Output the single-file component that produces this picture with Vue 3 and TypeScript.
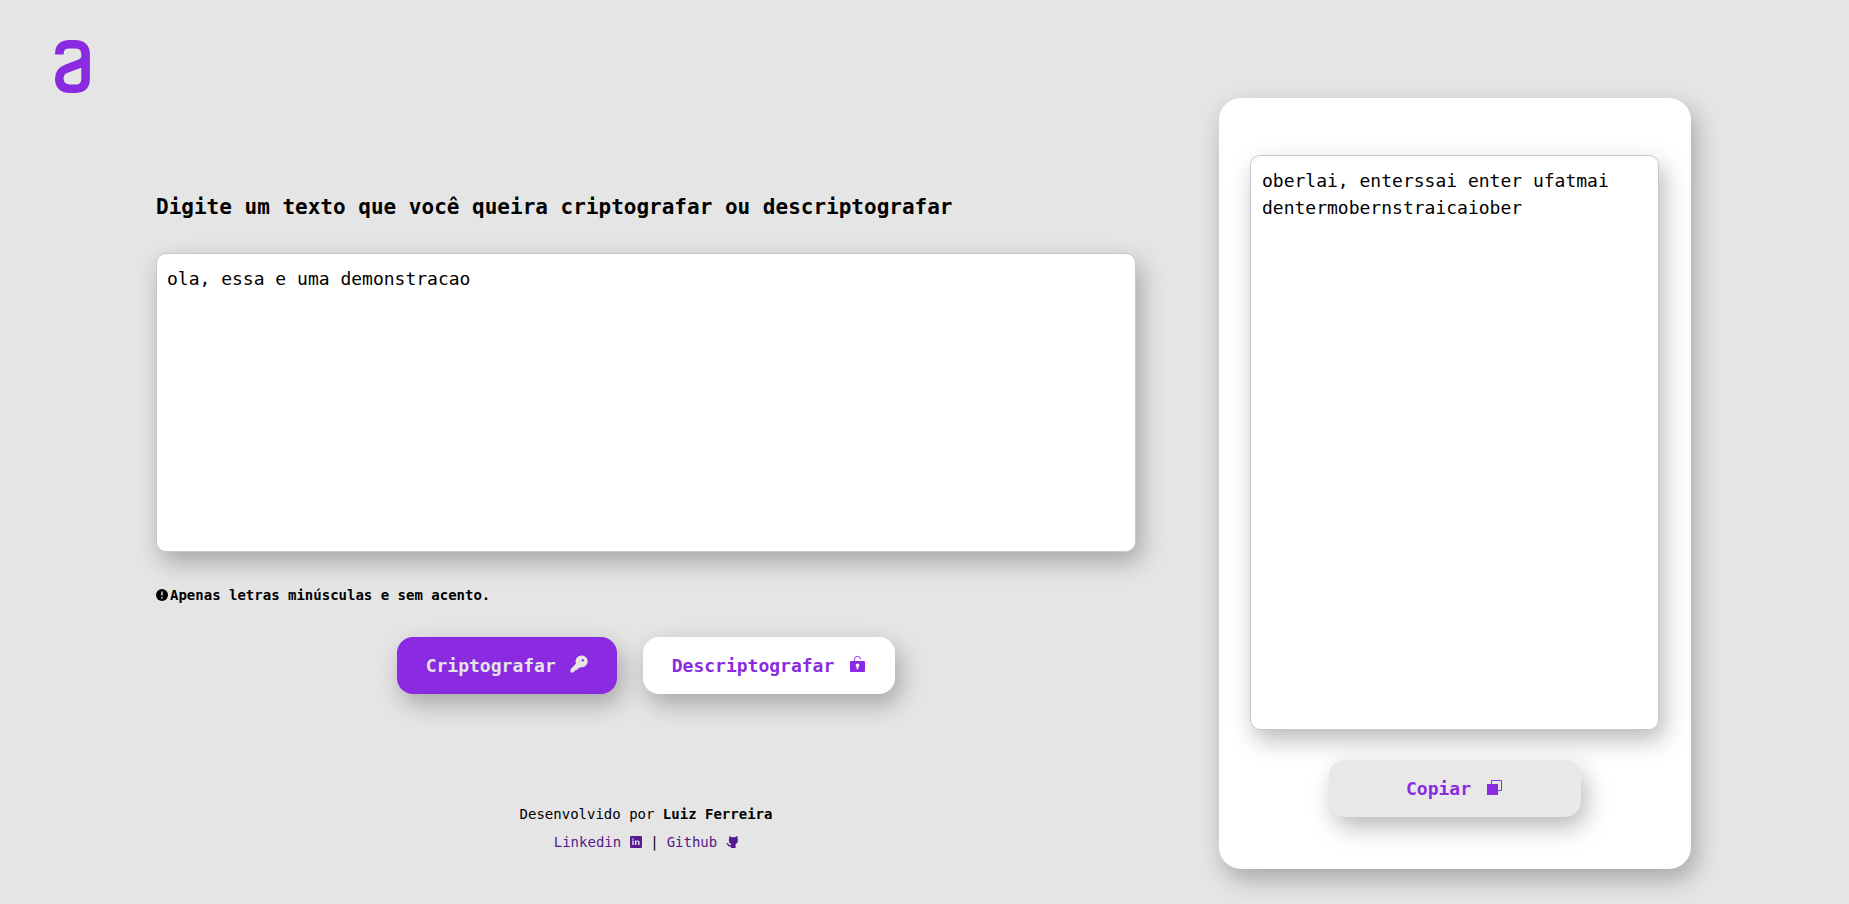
<script setup lang="ts">
import { ref } from 'vue'

const rules: [string, string][] = [
  ['e', 'enter'],
  ['i', 'imes'],
  ['a', 'ai'],
  ['o', 'ober'],
  ['u', 'ufat'],
]

const message = ref('ola, essa e uma demonstracao')
const result = ref('oberlai, enterssai enter ufatmai dentermobernstraicaiober')

function encrypt(): void {
  const table = new Map(rules)
  result.value = message.value.replace(/[eiaou]/g, (letter) => table.get(letter) ?? letter)
}

function decrypt(): void {
  result.value = rules.reduce((text, [letter, code]) => text.split(code).join(letter), message.value)
}

function copy(): void {
  void navigator.clipboard?.writeText(result.value)
}
</script>

<template>
  <div class="page">
    <header class="header">
      <svg class="logo" viewBox="0 0 35 53" role="img" aria-label="Logo">
        <path d="M4.3 14.5C4.3 7 8 4.3 15 4.3H20C27 4.3 30.6 8 30.6 14V38.5C30.6 46 26.5 48.7 20 48.7H15C8 48.7 4.3 45.5 4.3 39C4.3 32.5 7 30.3 12 28.5L24.5 23.8C29 22 30.6 20 30.6 15" />
      </svg>
    </header>

    <main class="main">
      <section class="editor">
        <label class="title" for="message">Digite um texto que você queira criptografar ou descriptografar</label>
        <textarea id="message" v-model="message" class="field message" spellcheck="false"></textarea>
        <p class="note">
          <svg class="note-icon" viewBox="0 0 12 12" aria-hidden="true">
            <circle cx="6" cy="6" r="6" />
            <path d="M6 2.6V6.6M6 8V9.4" />
          </svg>
          <span>Apenas letras minúsculas e sem acento.</span>
        </p>
        <div class="actions">
          <button class="button primary" type="button" @click="encrypt">
            Criptografar
            <svg class="icon" viewBox="0 0 18 18" aria-hidden="true">
              <path fill-rule="evenodd" d="M11.6.5a5.9 5.9 0 1 1-1.3 11.6L8.9 13.4H7.4V15H5.8L3.7 17.1Q3.3 17.5 2.7 17.5H1.2Q.5 17.5.5 16.8V14.9Q.5 14.3 1 13.8L6 8.6A5.9 5.9 0 0 1 11.6.5ZM12.7 4.1a1.2 1.2 0 1 0 .1 0Z" />
            </svg>
          </button>
          <button class="button" type="button" @click="decrypt">
            Descriptografar
            <svg class="icon" viewBox="0 0 18 18" aria-hidden="true">
              <path fill-rule="evenodd" d="M3 6H16Q17 6 17 7V16Q17 17 16 17H3Q2 17 2 16V7Q2 6 3 6ZM9.5 8.6A1.9 1.9 0 0 0 8.7 12.2V14.2H10.3V12.2A1.9 1.9 0 0 0 9.5 8.6Z" />
              <path class="line" d="M6.5 6V4.5A3 3 0 0 1 12.5 4.2" />
            </svg>
          </button>
        </div>
        <footer class="footer">
          <p>Desenvolvido por <strong>Luiz Ferreira</strong></p>
          <p class="links">
            <a href="#linkedin">Linkedin
              <svg class="link-icon" viewBox="0 0 12 12" aria-hidden="true">
                <path fill-rule="evenodd" d="M1 0H11Q12 0 12 1V11Q12 12 11 12H1Q0 12 0 11V1Q0 0 1 0ZM2.3 4.6V9H3.7V4.6ZM2.3 2.4V3.7H3.7V2.4ZM5 4.6V9H6.4V6.6Q6.4 5.6 7.3 5.6T8.2 6.6V9H9.6V6.3Q9.6 4.4 7.9 4.4Q6.9 4.4 6.4 5.1V4.6Z" />
              </svg>
            </a>
            <span>|</span>
            <a href="#github">Github
              <svg class="link-icon" viewBox="0 0 12 12" aria-hidden="true">
                <path d="M3.6 0 5.6 1.2H9L11.2 0Q11.8 1 11.6 2.6Q12.8 6.6 9.6 8V12H5V10.6Q2.6 11 1.7 9.3Q1.2 7.6 0 7.2Q1.9 6.7 2.7 8.2Q3.5 9.5 5 9V8Q2 6.6 3.2 2.6Q3 1 3.6 0Z" />
              </svg>
            </a>
          </p>
        </footer>
      </section>

      <section class="card">
        <textarea v-model="result" class="field result" aria-label="Resultado" readonly></textarea>
        <button class="button copy" type="button" @click="copy">
          Copiar
          <svg class="icon" viewBox="0 0 18 18" aria-hidden="true">
            <path d="M2 6H13V17H2Z" />
            <path class="line" d="M6.5 6V2.5H16.5V12.5H13" />
          </svg>
        </button>
      </section>
    </main>
  </div>
</template>

<style>
body {
  margin: 0;
  background: #e5e5e5;
}
</style>

<style scoped>
.page {
  box-sizing: border-box;
  min-height: 100vh;
  display: flex;
  flex-direction: column;
  background: #e5e5e5;
  color: #000;
  font-family: "DejaVu Sans Mono", monospace;
  font-size: 14px;
}

.header {
  padding: 40px 55px 5px;
}

.logo {
  display: block;
  width: 35px;
  height: 53px;
  fill: none;
  stroke: #8a2be2;
  stroke-width: 8.6;
}

.main {
  flex: 1;
  display: grid;
  grid-template-columns: 980fr 472fr;
  gap: 83px;
  padding: 0 158px 35px 156px;
}

.editor {
  display: flex;
  flex-direction: column;
  padding-top: 95px;
}

.title {
  font-size: 21px;
  font-weight: bold;
  line-height: 28px;
  margin-bottom: 32px;
}

.field {
  box-sizing: border-box;
  width: 100%;
  margin: 0;
  padding: 11px 10px;
  border: 1px solid #c8c8c8;
  border-radius: 10px;
  outline: none;
  resize: none;
  background: #fff;
  color: #000;
  font: 18px/27px "DejaVu Sans Mono", monospace;
  box-shadow: 5px 10px 24px rgba(0, 0, 0, 0.28);
}

.message {
  height: 299px;
}

.note {
  display: flex;
  align-items: center;
  gap: 2px;
  margin: 33px 0 32px;
  line-height: 20px;
  font-weight: bold;
}

.note-icon {
  width: 12px;
  height: 12px;
}

.note-icon path {
  stroke: #e5e5e5;
  stroke-width: 1.4;
}

.actions {
  display: flex;
  justify-content: center;
  gap: 26px;
}

.button {
  display: flex;
  align-items: center;
  justify-content: center;
  gap: 14px;
  height: 57px;
  padding: 0 29px;
  border: 0;
  border-radius: 16px;
  background: #fff;
  color: #8a2be2;
  font: bold 18px/27px "DejaVu Sans Mono", monospace;
  box-shadow: 5px 10px 24px rgba(0, 0, 0, 0.28);
  cursor: pointer;
}

.primary {
  background: #8a2be2;
  color: #e5e5e5;
}

.icon {
  width: 18px;
  height: 18px;
  margin-bottom: 4px;
  fill: currentColor;
}

.line {
  fill: none;
  stroke: currentColor;
  stroke-width: 1;
}

.footer {
  margin-top: auto;
  padding-bottom: 13px;
  text-align: center;
  line-height: 28px;
}

.footer p {
  margin: 0;
}

.footer .links {
  display: flex;
  justify-content: center;
  gap: 8px;
}

.links a {
  display: flex;
  align-items: center;
  gap: 9px;
  color: #551a8b;
  text-decoration: none;
}

.link-icon {
  width: 12px;
  height: 12px;
  fill: currentColor;
}

.card {
  display: flex;
  flex-direction: column;
  align-items: center;
  gap: 30px;
  padding: 57px 32px 52px 31px;
  border-radius: 22px;
  background: #fff;
  box-shadow: 5px 10px 24px rgba(0, 0, 0, 0.28);
}

.result {
  flex: 1;
  padding: 11px;
}

.copy {
  width: 252px;
  background: #e8e8e8;
}
</style>
